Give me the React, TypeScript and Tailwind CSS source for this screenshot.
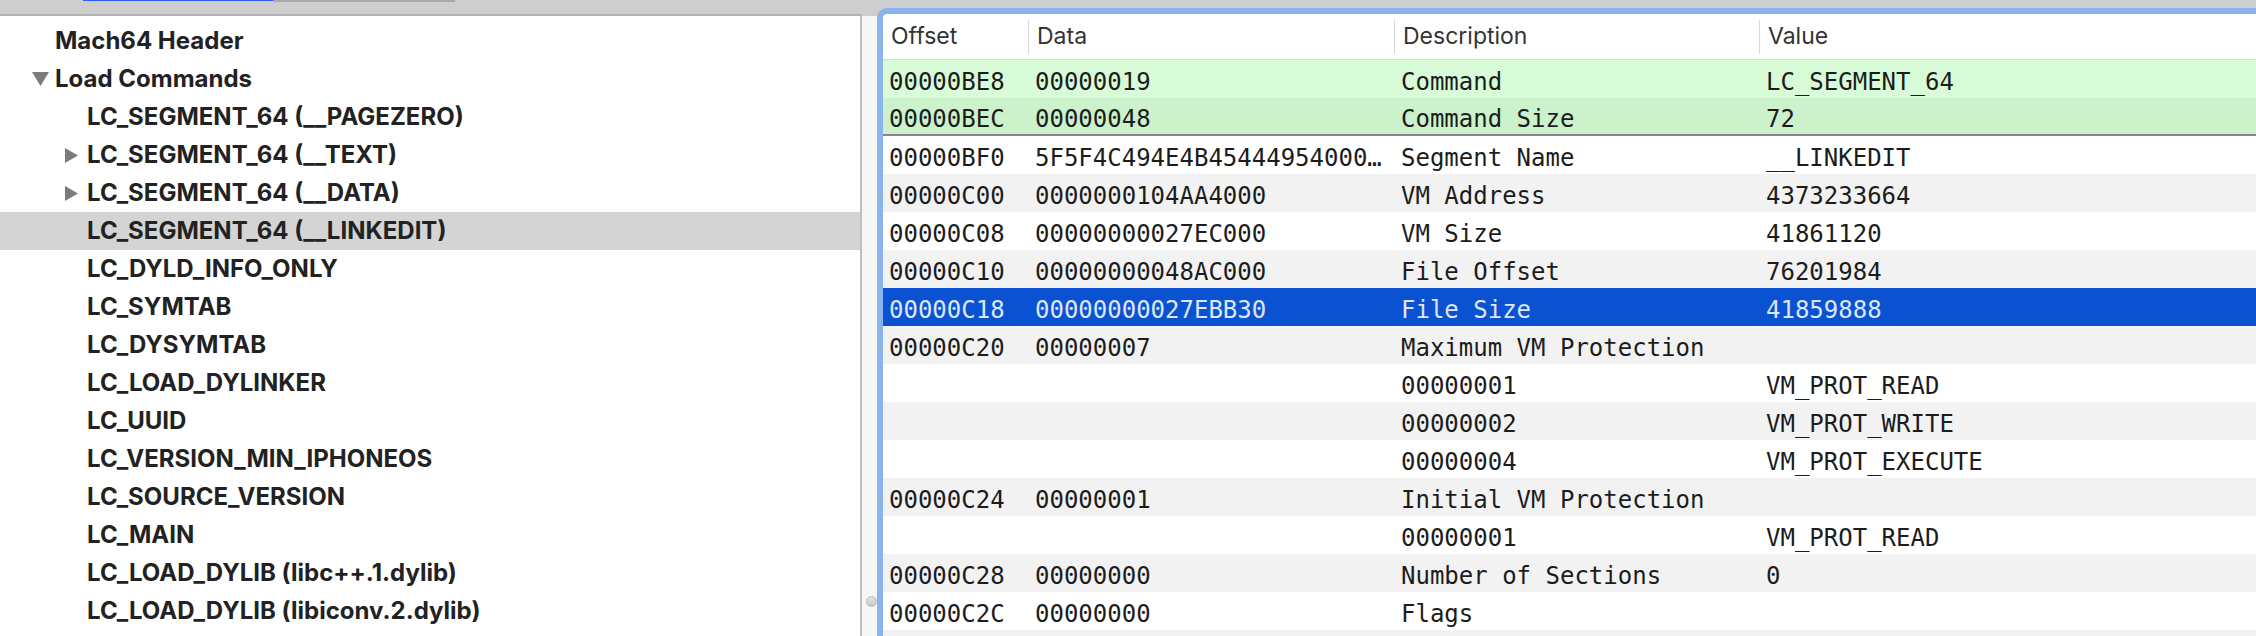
import React from 'react';

type TreeNode = { text: string; level: 0 | 1; toggle?: 'open' | 'closed'; selected?: boolean };

const tree: TreeNode[] = [
  { text: 'Mach64 Header', level: 0 },
  { text: 'Load Commands', level: 0, toggle: 'open' },
  { text: 'LC_SEGMENT_64 (__PAGEZERO)', level: 1 },
  { text: 'LC_SEGMENT_64 (__TEXT)', level: 1, toggle: 'closed' },
  { text: 'LC_SEGMENT_64 (__DATA)', level: 1, toggle: 'closed' },
  { text: 'LC_SEGMENT_64 (__LINKEDIT)', level: 1, selected: true },
  { text: 'LC_DYLD_INFO_ONLY', level: 1 },
  { text: 'LC_SYMTAB', level: 1 },
  { text: 'LC_DYSYMTAB', level: 1 },
  { text: 'LC_LOAD_DYLINKER', level: 1 },
  { text: 'LC_UUID', level: 1 },
  { text: 'LC_VERSION_MIN_IPHONEOS', level: 1 },
  { text: 'LC_SOURCE_VERSION', level: 1 },
  { text: 'LC_MAIN', level: 1 },
  { text: 'LC_LOAD_DYLIB (libc++.1.dylib)', level: 1 },
  { text: 'LC_LOAD_DYLIB (libiconv.2.dylib)', level: 1 },
];

// offset, data, description, value
const rows: string[][] = [
  ['00000BE8', '00000019', 'Command', 'LC_SEGMENT_64'],
  ['00000BEC', '00000048', 'Command Size', '72'],
  ['00000BF0', '5F5F4C494E4B45444954000…', 'Segment Name', '__LINKEDIT'],
  ['00000C00', '0000000104AA4000', 'VM Address', '4373233664'],
  ['00000C08', '00000000027EC000', 'VM Size', '41861120'],
  ['00000C10', '00000000048AC000', 'File Offset', '76201984'],
  ['00000C18', '00000000027EBB30', 'File Size', '41859888'],
  ['00000C20', '00000007', 'Maximum VM Protection', ''],
  ['', '', '00000001', 'VM_PROT_READ'],
  ['', '', '00000002', 'VM_PROT_WRITE'],
  ['', '', '00000004', 'VM_PROT_EXECUTE'],
  ['00000C24', '00000001', 'Initial VM Protection', ''],
  ['', '', '00000001', 'VM_PROT_READ'],
  ['00000C28', '00000000', 'Number of Sections', '0'],
  ['00000C2C', '00000000', 'Flags', ''],
  ['', '', '', ''],
];

const SELECTED = 6;

const Disclosure: React.FC<{ open: boolean }> = ({ open }) =>
  open ? (
    <svg width="17" height="14" viewBox="0 0 17 14">
      <polygon points="0,0 17,0 8.5,14" fill="#7b7b7b" />
    </svg>
  ) : (
    <svg width="13" height="15" viewBox="0 0 13 15">
      <polygon points="0,0 13,7.5 0,15" fill="#7b7b7b" />
    </svg>
  );

const LeftPane: React.FC = () => (
  <div className="flex w-[862px] shrink-0 flex-col">
    {/* top strip with cut-off tab indicator */}
    <div className="h-[16px] shrink-0 border-b-2 border-[#b4b4b4] bg-[#cecece]">
      <div className="flex h-[2px]">
        <div className="w-[83px]" />
        <div className="h-[1px] w-[190px] bg-[#2a5cff]" />
        <div className="h-[2px] w-[182px] bg-[#a9a9a9]" />
      </div>
    </div>
    <div className="flex-1 overflow-hidden border-r-2 border-[#bfbfbf] bg-white pt-[6px] font-['Inter',sans-serif] text-[24px] font-bold text-[#222222]">
      {tree.map((n, i) => (
        <div
          key={i}
          className={`flex h-[38px] items-center whitespace-nowrap ${n.selected ? 'bg-[#d4d4d4]' : ''} ${
            n.level === 0 ? 'pl-[32px]' : 'pl-[65px]'
          }`}
        >
          <div className={`flex shrink-0 items-center ${n.level === 0 ? 'w-[23px]' : 'w-[22px]'}`}>
            {n.toggle && <Disclosure open={n.toggle === 'open'} />}
          </div>
          <span>{n.text}</span>
        </div>
      ))}
    </div>
  </div>
);

const Splitter: React.FC = () => (
  <div className="flex w-[15px] shrink-0 flex-col">
    <div className="h-[16px] shrink-0 bg-[#cecece]" />
    <div className="flex flex-1 flex-col bg-[#f6f6f6]">
      <div className="mb-[29px] ml-[4px] mt-auto h-[11px] w-[11px] rounded-full border border-[#b9b9b9] bg-gradient-to-b from-[#e4e4e4] to-[#c6c6c6]" />
    </div>
  </div>
);

const cols = 'grid grid-cols-[146px_366px_365px_1fr]';

const rowBg = (i: number) => {
  if (i === 0) return 'bg-[#d8fcd7]';
  if (i === 1) return 'bg-[#cbf2cb] border-b-2 border-[#858585]';
  if (i === SELECTED) return 'bg-[#0b52d2] text-[#dde6fb]';
  return i % 2 === 0 ? 'bg-white' : 'bg-[#f2f2f2]';
};

const RightPane: React.FC = () => (
  <div className="flex min-w-0 flex-1 flex-col bg-[#cecece] pt-[8px]">
    <div className="flex flex-1 flex-col overflow-hidden rounded-tl-[10px] border-l-[6px] border-t-[6px] border-[#8bb3ee] bg-white">
      <div className={`${cols} h-[46px] shrink-0 border-b border-[#d6d6d6] font-['Inter',sans-serif] text-[23px] text-[#333333]`}>
        {['Offset', 'Data', 'Description', 'Value'].map((h, i) => (
          <div key={h} className="flex items-center">
            <span className="flex-1 pl-[8px]">{h}</span>
            {i < 3 && <div className="h-[34px] w-px bg-[#d8d8d8]" />}
          </div>
        ))}
      </div>
      <div className="font-['DejaVu_Sans_Mono',monospace] text-[24px] text-[#1c1c1c]">
        {rows.map((r, i) => (
          <div key={i} className={`${cols} box-border h-[38px] ${rowBg(i)}`}>
            {r.map((c, j) => (
              <div key={j} className="flex items-center overflow-hidden whitespace-nowrap pl-[6px] pt-[6px] leading-none">
                {c}
              </div>
            ))}
          </div>
        ))}
      </div>
    </div>
  </div>
);

const App: React.FC = () => (
  <div className="flex h-[636px] w-[2256px] overflow-hidden bg-[#cecece]">
    <LeftPane />
    <Splitter />
    <RightPane />
  </div>
);

export default App;
